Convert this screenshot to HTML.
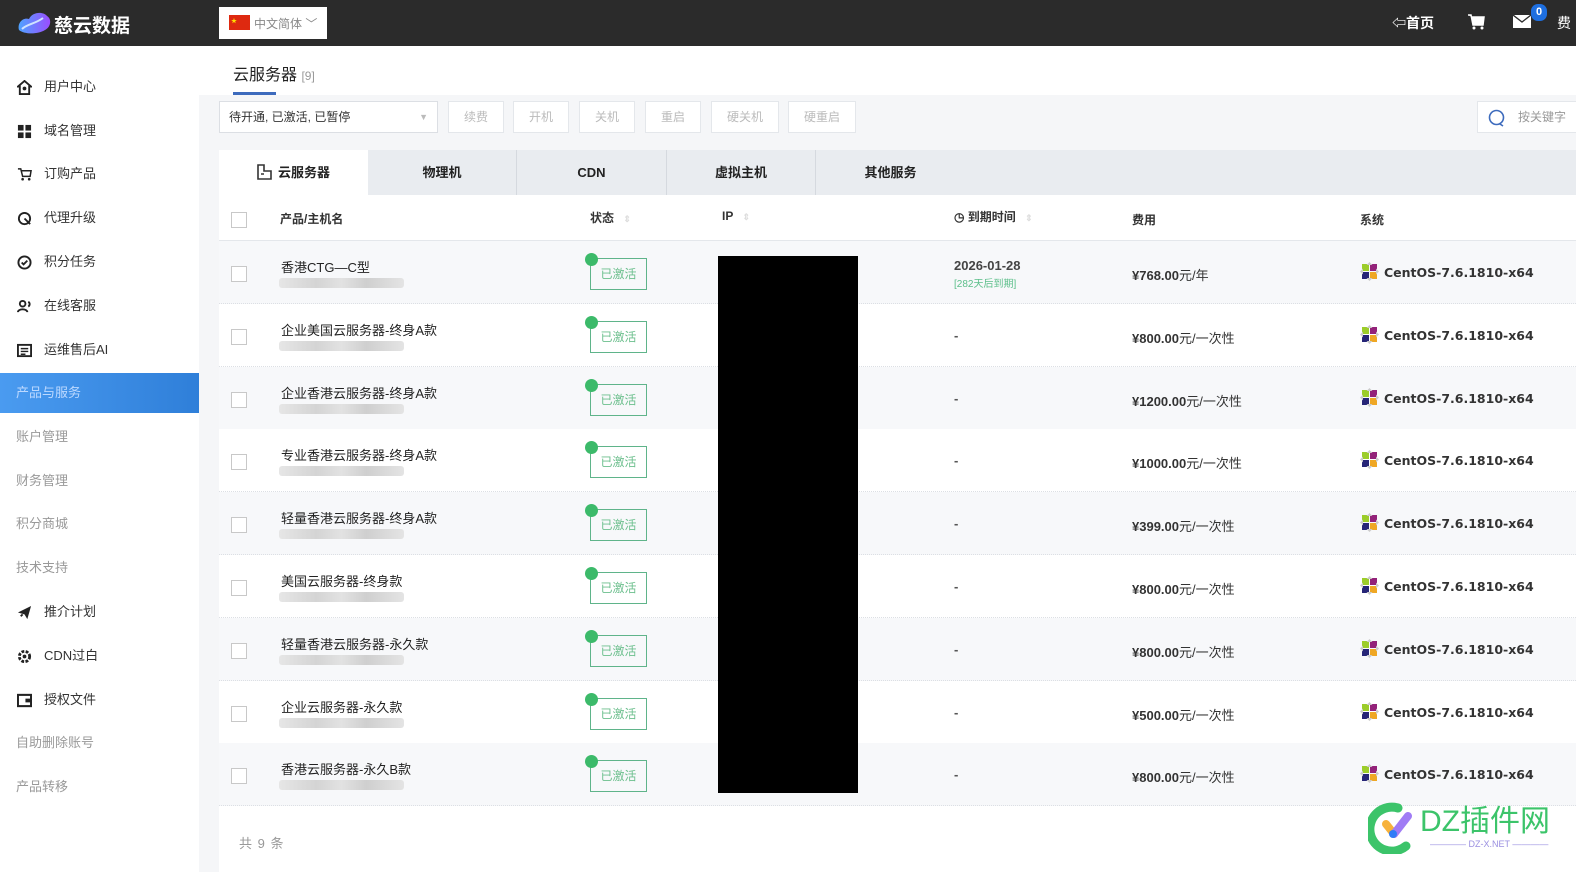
<!DOCTYPE html>
<html><head><meta charset="utf-8">
<style>
*{margin:0;padding:0;box-sizing:border-box}
body{width:1576px;height:872px;overflow:hidden;background:#f5f6f8;font-family:"Liberation Sans","Noto Sans CJK SC",sans-serif;font-size:13px;color:#333;position:relative}
.a{position:absolute}
#top{left:0;top:0;width:1576px;height:46px;background:#2b2b2b}
#side{left:0;top:46px;width:199px;height:826px;background:#fff}
.mi{position:absolute;left:0;width:199px;height:40px;line-height:40px;padding-left:44px;font-size:13px;color:#333}
.mi.g{padding-left:16px;color:#999}
.mi.act{background:linear-gradient(90deg,#4a9bf0,#2f7fd9);color:#bcd9ff;padding-left:16px;height:40px}
.ic{position:absolute;left:17px;top:13px;width:15px;height:15px}
.btn{position:absolute;top:101px;height:32px;border:1px solid #e4e7eb;background:#fff;color:#bbb;font-size:12px;line-height:30px;text-align:center}
.tab{position:absolute;top:150px;height:45px;line-height:46px;text-align:center;font-weight:bold;font-size:13px;color:#222;border-right:1px solid #d5d9df}
.row{position:absolute;left:219px;width:1357px;height:63px;border-bottom:1px dotted #dcdfe4}
.cb{position:absolute;left:12px;width:16px;height:16px;border:1px solid #c8c8c8;background:#fff}
.nm{position:absolute;left:62px;top:16px;font-size:13px;color:#222}
.blur{position:absolute;left:60px;top:37px;width:125px;height:10px;background:linear-gradient(90deg,#e6e6e6,#d4d4d4 30%,#e2e2e2 50%,#cfcfcf 70%,#e4e4e4);border-radius:3px}
.bd{position:absolute;left:371px;top:17px;width:57px;height:32px;border:1px solid #5fb48a;color:#6cbf8d;font-size:12px;line-height:30px;text-align:center;background:transparent}
.dot{position:absolute;left:366px;top:12px;width:13px;height:13px;border-radius:50%;background:#3cba6a}
.dash{position:absolute;left:735px;top:24px;font-weight:bold;color:#555}
.fee{position:absolute;left:913px;top:24px;color:#333;font-weight:bold;font-size:13px}
.fee span{font-weight:normal}
.os{position:absolute;left:1141px;top:21px;font-weight:bold;color:#333;font-size:12.5px;font-family:"DejaVu Sans",sans-serif}
.os i{display:inline-block;width:19px;height:19px;vertical-align:-4px;margin-right:5px}
</style></head><body>
<div id="top" class="a">
  <svg class="a" style="left:17px;top:9px" width="36" height="28" viewBox="0 0 36 26"><defs><linearGradient id="lg" x1="0" x2="1"><stop offset="0" stop-color="#4fa3ff"/><stop offset="1" stop-color="#9b4dff"/></linearGradient></defs><path d="M2 20C0 13 6 7 12 9 15 2 26 1 30 6 35 9 34 17 28 20 22 24 8 25 2 20Z" fill="url(#lg)"/><path d="M5 19C10 14 18 14 26 8" stroke="#cfe3ff" stroke-width="2" fill="none"/></svg>
  <div class="a" style="left:54px;top:11px;color:#fff;font-size:19px;font-weight:bold">慈云数据</div>
  <div class="a" style="left:219px;top:7px;width:108px;height:32px;background:#fff"></div>
  <div class="a" style="left:229px;top:15px;width:21px;height:15px;background:#de2910"></div>
  <div class="a" style="left:231px;top:16px;color:#ffde00;font-size:6px">★</div>
  <div class="a" style="left:254px;top:15px;color:#888;font-size:12px">中文简体 ﹀</div>
  <div class="a" style="left:1392px;top:13px;color:#fff;font-size:14px;font-weight:bold">⇦首页</div>
  <svg class="a" style="left:1467px;top:14px" width="18" height="16" viewBox="0 0 18 16"><path d="M1 1h3l2 10h10l1-8H5" fill="#fff" stroke="#fff" stroke-width="1.5"/><circle cx="7" cy="14" r="1.5" fill="#fff"/><circle cx="15" cy="14" r="1.5" fill="#fff"/></svg>
  <svg class="a" style="left:1513px;top:15px" width="18" height="13" viewBox="0 0 18 13"><rect width="18" height="13" fill="#fff"/><path d="M0 0l9 7 9-7" stroke="#2b2b2b" fill="none" stroke-width="1.3"/></svg>
  <div class="a" style="left:1531px;top:4px;width:16px;height:17px;border-radius:7px;background:#1e6fe0;color:#fff;font-size:11px;font-weight:bold;text-align:center;line-height:17px">0</div>
  <div class="a" style="left:1557px;top:13px;color:#fff;font-size:14px">费</div>
</div>
<div id="side" class="a">
  <div class="mi" style="top:21px"><svg class="ic" viewBox="0 0 16 16"><path d="M8 1L1 7h2v8h10V7h2z" fill="none" stroke="#222" stroke-width="2"/><circle cx="8" cy="9" r="2" fill="#222"/></svg>用户中心</div>
  <div class="mi" style="top:65px"><svg class="ic" viewBox="0 0 16 16"><rect x="1" y="1" width="6" height="6" fill="#222"/><rect x="9" y="1" width="6" height="6" fill="#222"/><rect x="1" y="9" width="6" height="6" fill="#222"/><rect x="9" y="9" width="6" height="6" fill="#222"/></svg>域名管理</div>
  <div class="mi" style="top:108px"><svg class="ic" viewBox="0 0 16 16"><path d="M1 2h3l2 8h8l1-6H5" fill="none" stroke="#222" stroke-width="1.6"/><circle cx="6" cy="13" r="1.4" fill="#222"/><circle cx="13" cy="13" r="1.4" fill="#222"/></svg>订购产品</div>
  <div class="mi" style="top:152px"><svg class="ic" viewBox="0 0 16 16"><circle cx="8" cy="8" r="6" fill="none" stroke="#222" stroke-width="2"/><path d="M8 8l6 6" stroke="#222" stroke-width="2"/></svg>代理升级</div>
  <div class="mi" style="top:196px"><svg class="ic" viewBox="0 0 16 16"><circle cx="8" cy="8" r="6.5" fill="none" stroke="#222" stroke-width="2"/><path d="M5 8l2 2 4-4" fill="none" stroke="#222" stroke-width="2"/></svg>积分任务</div>
  <div class="mi" style="top:240px"><svg class="ic" viewBox="0 0 16 16"><circle cx="6" cy="5" r="3" fill="none" stroke="#222" stroke-width="2"/><path d="M1 14c0-4 10-4 10 0M12 3c2 1 2 4 0 5" fill="none" stroke="#222" stroke-width="2"/></svg>在线客服</div>
  <div class="mi" style="top:284px"><svg class="ic" viewBox="0 0 16 16"><rect x="1" y="2" width="14" height="12" fill="none" stroke="#222" stroke-width="2"/><path d="M4 6h8M4 9h8M4 12h5" stroke="#222" stroke-width="1.5"/></svg>运维售后AI</div>
  <div class="mi act" style="top:327px">产品与服务</div>
  <div class="mi g" style="top:371px">账户管理</div>
  <div class="mi g" style="top:415px">财务管理</div>
  <div class="mi g" style="top:458px">积分商城</div>
  <div class="mi g" style="top:502px">技术支持</div>
  <div class="mi" style="top:546px"><svg class="ic" viewBox="0 0 16 16"><path d="M1 8L15 1 11 15 8 10z" fill="#222"/><path d="M4 12l2-2" stroke="#222" stroke-width="2"/></svg>推介计划</div>
  <div class="mi" style="top:590px"><svg class="ic" viewBox="0 0 16 16"><circle cx="8" cy="8" r="5.5" fill="none" stroke="#222" stroke-width="3" stroke-dasharray="3 1.5"/><circle cx="8" cy="8" r="2" fill="#222"/></svg>CDN过白</div>
  <div class="mi" style="top:634px"><svg class="ic" viewBox="0 0 16 16"><rect x="1" y="2" width="14" height="12" fill="none" stroke="#222" stroke-width="2.2"/><rect x="9" y="6" width="6" height="4" fill="#222"/></svg>授权文件</div>
  <div class="mi g" style="top:677px">自助删除账号</div>
  <div class="mi g" style="top:721px">产品转移</div>
</div>
<div class="a" style="left:199px;top:46px;width:1377px;height:49px;background:#fff"></div>
<div class="a" style="left:233px;top:61px;font-size:16px;color:#222">云服务器 <span style="font-size:12px;color:#999">[9]</span></div>
<div class="a" style="left:233px;top:92px;width:43px;height:3px;background:#3d6bbd"></div>
<div class="a" style="left:219px;top:101px;width:219px;height:32px;border:1px solid #dcdfe4;background:#fff;font-size:12px;line-height:30px;padding-left:9px;color:#333">待开通, 已激活, 已暂停<span style="position:absolute;right:9px;color:#bbb;font-size:9px">▼</span></div>
<div class="btn" style="left:448px;width:56px">续费</div>
<div class="btn" style="left:513px;width:56px">开机</div>
<div class="btn" style="left:579px;width:56px">关机</div>
<div class="btn" style="left:645px;width:56px">重启</div>
<div class="btn" style="left:711px;width:68px">硬关机</div>
<div class="btn" style="left:788px;width:68px">硬重启</div>
<div class="a" style="left:1477px;top:101px;width:110px;height:32px;border:1px solid #e4e7eb;background:#fff;color:#999;font-size:12px;line-height:30px;padding-left:40px">按关键字</div>
<svg class="a" style="left:1488px;top:109px" width="18" height="18" viewBox="0 0 18 18"><circle cx="8.5" cy="8.5" r="7" fill="none" stroke="#3d6bbd" stroke-width="1.6"/><path d="M12 15l3 2" stroke="#3d6bbd" stroke-width="1.6"/></svg>
<div class="a" style="left:219px;top:150px;width:1357px;height:45px;background:#e9ecf0"></div>
<div class="tab" style="left:219px;width:149px;background:#fff;border-right:none"><svg style="vertical-align:-3px;margin-right:6px" width="15" height="16" viewBox="0 0 15 16"><path d="M1 1h6v6h7v8H1z" fill="none" stroke="#333" stroke-width="1.6"/><path d="M4 10h3" stroke="#333" stroke-width="1.5"/></svg>云服务器</div>
<div class="tab" style="left:368px;width:149px">物理机</div>
<div class="tab" style="left:517px;width:150px">CDN</div>
<div class="tab" style="left:667px;width:149px">虚拟主机</div>
<div class="tab" style="left:816px;width:149px;border-right:none">其他服务</div>
<div class="a" style="left:219px;top:195px;width:1357px;height:677px;background:#fff"></div>
<div class="a" style="left:219px;top:195px;width:1357px;height:46px;border-bottom:1px solid #e4e7eb">
  <div class="cb" style="top:17px"></div>
  <div class="a" style="left:61px;top:15px;font-weight:bold;font-size:12px;color:#333">产品/主机名</div>
  <div class="a" style="left:371px;top:14px;font-weight:bold;font-size:12px;color:#333">状态 <span style="color:#ddd;font-size:9px;margin-left:6px">⇕</span></div>
  <div class="a" style="left:503px;top:14px;font-weight:bold;font-size:12px;color:#333">IP <span style="color:#ddd;font-size:9px;margin-left:6px">⇕</span></div>
  <div class="a" style="left:735px;top:13px;font-weight:bold;font-size:12px;color:#333">◷ 到期时间 <span style="color:#ddd;font-size:9px;margin-left:6px">⇕</span></div>
  <div class="a" style="left:913px;top:16px;font-weight:bold;font-size:12px;color:#333">费用</div>
  <div class="a" style="left:1141px;top:16px;font-weight:bold;font-size:12px;color:#333">系统</div>
</div>
<div id="rows"></div>
<div class="a" style="left:718px;top:256px;width:140px;height:537px;background:#000"></div>
<div class="a" style="left:239px;top:833px;color:#999;font-size:13px;letter-spacing:1px">共 9 条</div>
<svg class="a" style="left:1368px;top:802px" width="50" height="52" viewBox="0 0 50 52"><path d="M30 6A22 22 0 1 0 38 44" fill="none" stroke="#3cc46a" stroke-width="9" stroke-linecap="round"/><path d="M18 22l8 10" stroke="#f7b23b" stroke-width="8" stroke-linecap="round"/><path d="M26 32l14-18" stroke="#a07cf5" stroke-width="8" stroke-linecap="round"/><circle cx="25" cy="32" r="4" fill="#2f7df6"/></svg>
<div class="a" style="left:1420px;top:804px;color:#3cc46a;font-size:30px;line-height:36px">DZ插件网</div>
<div class="a" style="left:1430px;top:839px;color:#9a8fe0;font-size:9px">———— DZ-X.NET ————</div>
<script>
var d=[["香港CTG—C型","¥768.00","元/年"],["企业美国云服务器-终身A款","¥800.00","元/一次性"],["企业香港云服务器-终身A款","¥1200.00","元/一次性"],["专业香港云服务器-终身A款","¥1000.00","元/一次性"],["轻量香港云服务器-终身A款","¥399.00","元/一次性"],["美国云服务器-终身款","¥800.00","元/一次性"],["轻量香港云服务器-永久款","¥800.00","元/一次性"],["企业云服务器-永久款","¥500.00","元/一次性"],["香港云服务器-永久B款","¥800.00","元/一次性"]];
var os='<i><svg width="19" height="19" viewBox="0 0 19 19"><rect x="2" y="2" width="7" height="7" fill="#9ccd2a"/><rect x="10" y="2" width="7" height="7" fill="#932279"/><rect x="2" y="10" width="7" height="7" fill="#262577"/><rect x="10" y="10" width="7" height="7" fill="#efa724"/><path d="M9.5 0l3 3h-6zM9.5 19l3-3h-6zM0 9.5l3 3v-6zM19 9.5l-3 3v-6z" fill="#ccc"/></svg></i>';
var h='';
for(var i=0;i<9;i++){var t=241+i*62.8;
h+='<div class="row" style="top:'+t+'px;background:'+(i%2==0?'#f7f8fa':'#fff')+'"><div class="cb" style="top:25px"></div><div class="nm">'+d[i][0]+'</div><div class="blur"></div><div class="bd">已激活</div><div class="dot"></div>'+
(i==0?'<div class="a" style="left:735px;top:17px;font-weight:bold;color:#444;font-size:13px">2026-01-28</div><div class="a" style="left:735px;top:34px;color:#5cbf8a;font-size:10px">[282天后到期]</div>':'<div class="dash">-</div>')+
'<div class="fee">'+d[i][1]+'<span>'+d[i][2]+'</span></div><div class="os">'+os+'CentOS-7.6.1810-x64</div></div>';}
document.getElementById('rows').innerHTML=h;
</script>
</body></html>
